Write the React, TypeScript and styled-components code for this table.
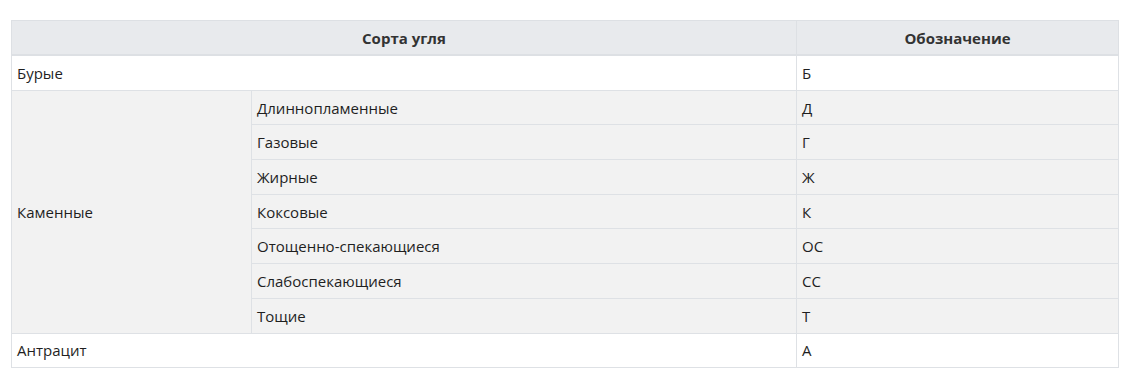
import styled, {createGlobalStyle} from "styled-components";

const GlobalStyle = createGlobalStyle`
  body {
    margin: 0;
    background: #fff;
    font-family: "Open Sans", "Liberation Sans", sans-serif;
    color: #222;
  }
`;

const Page = styled.div`
  padding: 20px 15px 0 11px;
`;

const StyledTable = styled.table`
  border-collapse: collapse;
  width: 1107px;
  table-layout: fixed;
  font-size: 15px;
  line-height: 20px;
`;

const TH = styled.th`
  background-color: #e8eaed;
  color: #333;
  font-weight: 700;
  text-align: center;
  height: 33px;
  padding: 0 6px;
  border: 1px solid #dde0e4;
  border-bottom: 2px solid #dde0e4;
`;

const TR = styled.tr<{$shade?: boolean}>`
  background-color: ${(p) => (p.$shade ? "#f2f2f2" : "#fff")};
`;

const TD = styled.td`
  height: 33.7px;
  padding: 0 5px;
  text-align: left;
  vertical-align: middle;
  border: 1px solid #dee1e5;
  color: #1f1f1f;
`;

type Row = {sub: string; code: string};

const stone: Row[] = [
  {sub: "Длиннопламенные", code: "Д"},
  {sub: "Газовые", code: "Г"},
  {sub: "Жирные", code: "Ж"},
  {sub: "Коксовые", code: "К"},
  {sub: "Отощенно-спекающиеся", code: "ОС"},
  {sub: "Слабоспекающиеся", code: "СС"},
  {sub: "Тощие", code: "Т"},
];

export default function App() {
  return (
    <Page>
      <GlobalStyle/>
      <StyledTable>
        <colgroup>
          <col style={{width: 240}}/>
          <col style={{width: 545}}/>
          <col style={{width: 322}}/>
        </colgroup>
        <thead>
          <tr>
            <TH colSpan={2}>Сорта угля</TH>
            <TH>Обозначение</TH>
          </tr>
        </thead>
        <tbody>
          <TR>
            <TD colSpan={2}>Бурые</TD>
            <TD>Б</TD>
          </TR>
          {stone.map((r, i) => (
            <TR $shade key={r.code}>
              {i === 0 && <TD rowSpan={stone.length}>Каменные</TD>}
              <TD>{r.sub}</TD>
              <TD>{r.code}</TD>
            </TR>
          ))}
          <TR>
            <TD colSpan={2}>Антрацит</TD>
            <TD>А</TD>
          </TR>
        </tbody>
      </StyledTable>
    </Page>
  );
}
